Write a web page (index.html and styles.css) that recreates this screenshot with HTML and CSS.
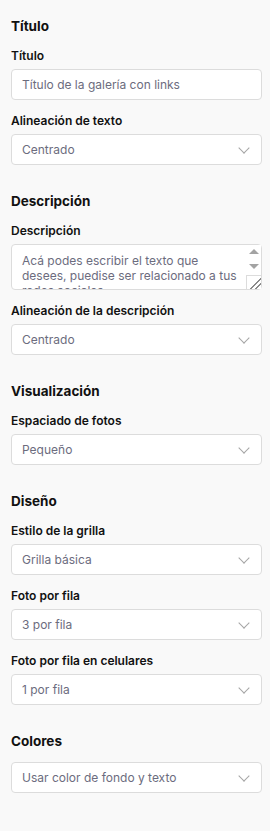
FILE: index.html
```html
<!doctype html>
<html lang="es">
  <head>
    <meta charset="UTF-8" />
    <meta name="viewport" content="width=device-width, initial-scale=1.0" />
    <link rel="stylesheet" href="styles.css">
    <title>Galería con links</title>
  </head>
  <body>
    <div class="panel">
      <!-- Título -->
      <section class="group">
        <h2>Título</h2>
        <div class="field">
          <label for="titulo">Título</label>
          <input id="titulo" type="text" placeholder="Título de la galería con links" />
        </div>
        <div class="field">
          <label for="alin-titulo">Alineación de texto</label>
          <div class="select">
            <select id="alin-titulo">
              <option>Centrado</option>
            </select>
          </div>
        </div>
      </section>

      <!-- Descripción -->
      <section class="group">
        <h2>Descripción</h2>
        <div class="field">
          <label for="desc">Descripción</label>
          <div class="textarea-wrap">
            <textarea id="desc">Acá podes escribir el texto que desees, puedise ser relacionado a tus redes sociales</textarea>
            <!-- classic scrollbar look -->
            <div class="scrollbar">
              <span class="arrow up"></span>
              <span class="arrow down"></span>
              <span class="grip"></span>
            </div>
          </div>
        </div>
        <div class="field">
          <label for="alin-desc">Alineación de la descripción</label>
          <div class="select">
            <select id="alin-desc">
              <option>Centrado</option>
            </select>
          </div>
        </div>
      </section>

      <!-- Visualización -->
      <section class="group">
        <h2>Visualización</h2>
        <div class="field">
          <label for="espaciado">Espaciado de fotos</label>
          <div class="select">
            <select id="espaciado">
              <option>Pequeño</option>
            </select>
          </div>
        </div>
      </section>

      <!-- Diseño -->
      <section class="group">
        <h2>Diseño</h2>
        <div class="field">
          <label for="grilla">Estilo de la grilla</label>
          <div class="select">
            <select id="grilla">
              <option>Grilla básica</option>
            </select>
          </div>
        </div>
        <div class="field">
          <label for="por-fila">Foto por fila</label>
          <div class="select">
            <select id="por-fila">
              <option>3 por fila</option>
            </select>
          </div>
        </div>
        <div class="field">
          <label for="por-fila-cel">Foto por fila en celulares</label>
          <div class="select">
            <select id="por-fila-cel">
              <option>1 por fila</option>
            </select>
          </div>
        </div>
      </section>

      <!-- Colores -->
      <section class="group">
        <h2>Colores</h2>
        <div class="select">
          <select>
            <option>Usar color de fondo y texto</option>
          </select>
        </div>
      </section>

      <section class="group last">
        <h2>Links</h2>
      </section>
    </div>
  </body>
</html>
```

FILE: styles.css
```css
html,
body {
  margin: 0;
  background: #f9f9f9;
  font-family: Inter, "Noto Sans", sans-serif;
  color: #111;
}

.panel {
  display: flex;
  flex-direction: column;
  gap: 26px; /* space between groups */
  padding: 16px 8px 0 11px;
}

.group {
  display: flex;
  flex-direction: column;
  gap: 12px;
}

.group.last {
  margin-top: 8px;
}

.group h2 {
  margin: 0 0 -1px;
  font-size: 13.5px;
  line-height: 20px;
  font-weight: 700;
}

.field {
  display: flex;
  flex-direction: column;
  gap: 4px;
}

.field label {
  font-size: 12px;
  line-height: 18px;
  font-weight: 600;
}

input,
select,
textarea {
  box-sizing: border-box;
  width: 100%;
  margin: 0;
  border: 1px solid #dcdcdc;
  border-radius: 4px;
  background: #fff;
  font-family: inherit;
  font-size: 12px;
  color: #6c6c7e;
  outline: none;
}

input {
  height: 31px;
  padding: 0 10px;
}

input::placeholder {
  color: #6c6c7e;
}

.textarea-wrap {
  position: relative;
}

textarea {
  display: block;
  height: 46px;
  padding: 8px 18px 7px 10px;
  line-height: 15px;
  resize: none;
  overflow: hidden;
}

.scrollbar {
  position: absolute;
  top: 1px;
  right: 1px;
  bottom: 1px;
  width: 15px;
  display: flex;
  flex-direction: column;
  align-items: center;
  background: #fff;
}

.arrow {
  width: 0;
  height: 0;
  border-left: 5px solid transparent;
  border-right: 5px solid transparent;
}

.arrow.up {
  margin-top: 4px;
  border-bottom: 5px solid #a3a3a3;
}

.arrow.down {
  margin-top: 10px;
  border-top: 5px solid #a3a3a3;
}

.grip {
  margin-top: auto;
  box-sizing: border-box;
  width: 15px;
  height: 14px;
  border-top: 1px solid #dcdcdc;
  border-left: 1px solid #dcdcdc;
  background: linear-gradient(
    135deg,
    transparent 58%,
    #8a8a8a 58%, #8a8a8a 64%,
    transparent 64%, transparent 76%,
    #8a8a8a 76%, #8a8a8a 82%,
    transparent 82%
  );
}

.select {
  position: relative;
}

.select select {
  height: 31px;
  padding: 0 30px 0 10px;
  appearance: none;
}

/* chevron drawn with borders */
.select::after {
  content: "";
  position: absolute;
  right: 14px;
  top: 10px;
  width: 7px;
  height: 7px;
  border-right: 1px solid #a5a5a5;
  border-bottom: 1px solid #a5a5a5;
  transform: rotate(45deg);
  pointer-events: none;
}
```
